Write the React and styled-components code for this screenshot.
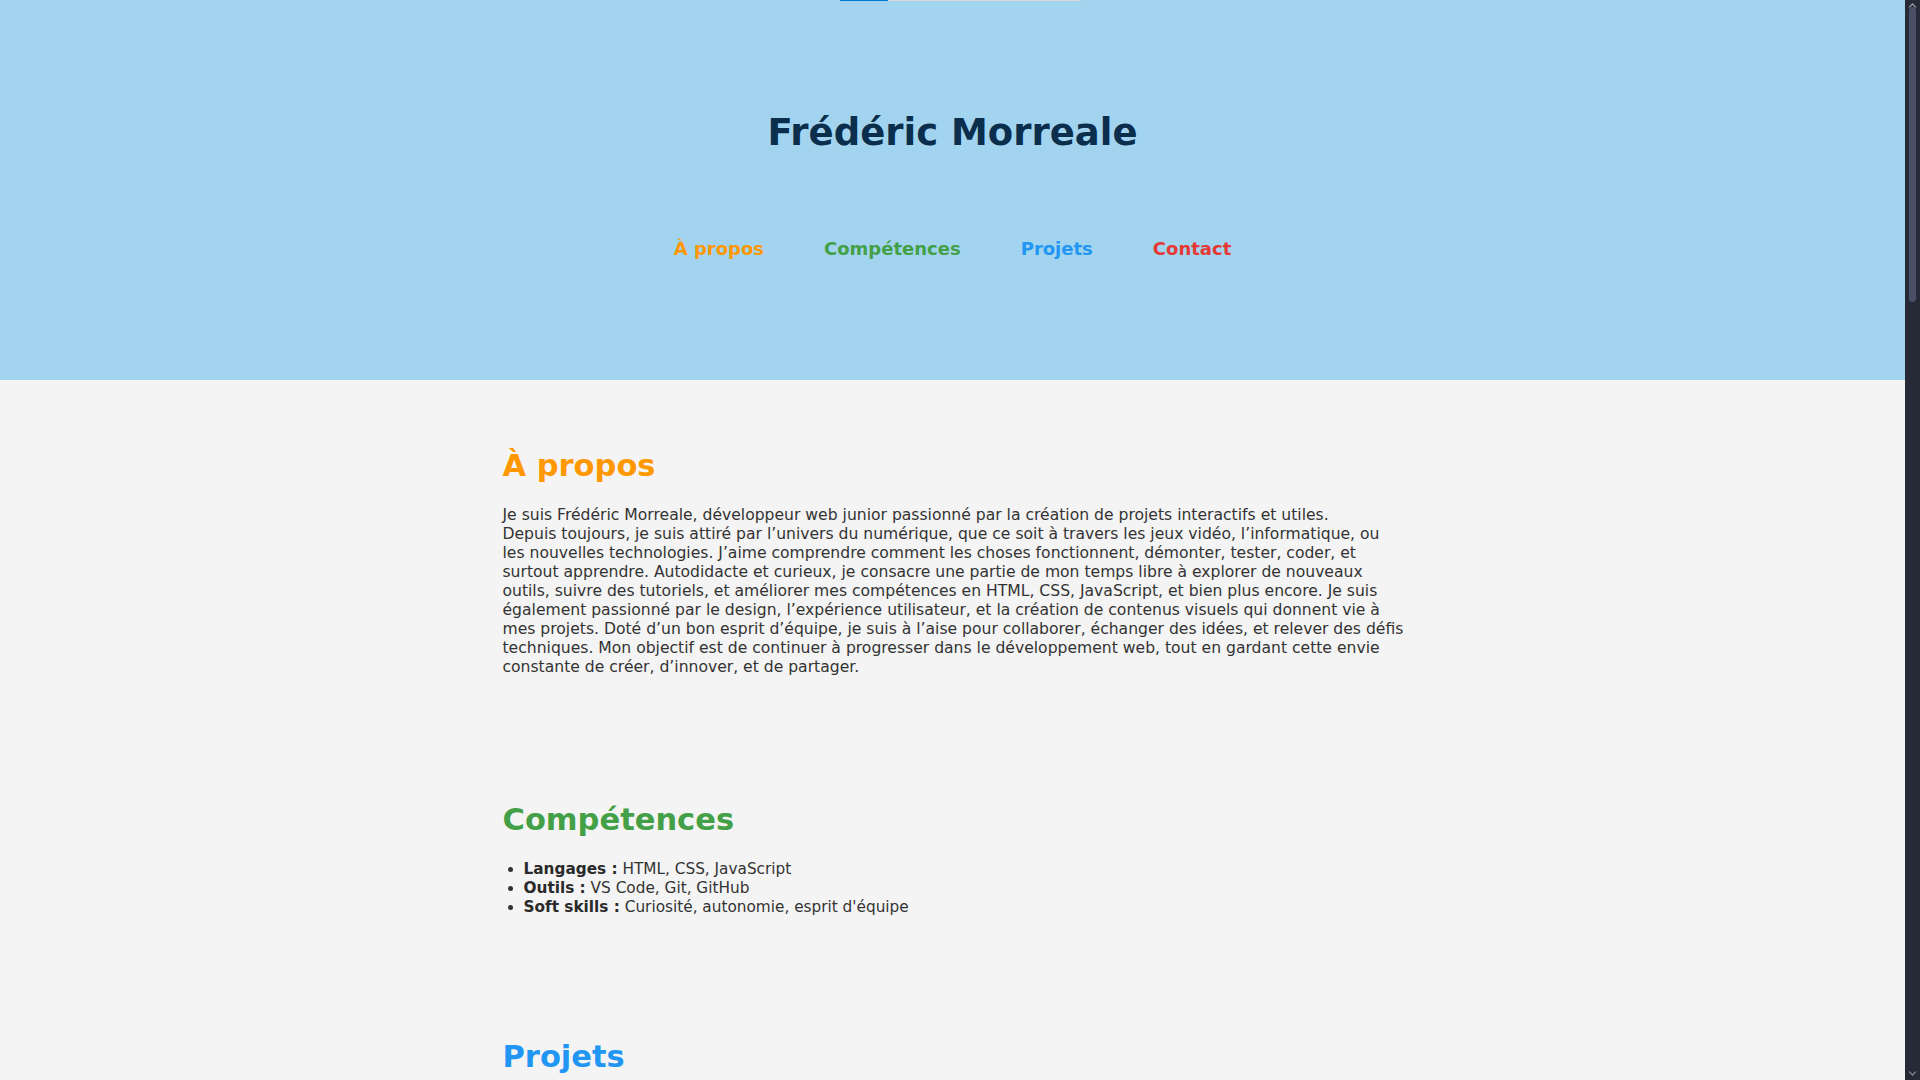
import React from "react";
import styled, { createGlobalStyle } from "styled-components";

const Global = createGlobalStyle`
  html {
    scrollbar-color: #4a4e67 #262a37;
  }
  body {
    margin: 0;
    background: #f4f4f4;
    color: #333333;
    font-family: "DejaVu Sans", "Noto Sans", sans-serif;
  }
`;

const Page = styled.div`
  margin-right: 15px;
`;

const ScrollTrack = styled.div`
  position: fixed;
  top: 0;
  right: 0;
  width: 15px;
  height: 100vh;
  background: #262a37;
  z-index: 20;
  display: flex;
  flex-direction: column;
  align-items: center;
`;

const ScrollArrow = styled.svg`
  display: block;
  width: 9px;
  height: 6px;
  margin: ${(p) => (p.$down ? "auto 0 3px" : "2px 0 0")};
`;

const ScrollThumb = styled.div`
  width: 7px;
  height: 295px;
  margin-top: -1px;
  border-radius: 4px;
  background: #4a4e67;
`;

const TopIndicator = styled.div`
  position: fixed;
  top: 0;
  left: 840px;
  width: 241px;
  height: 1px;
  background: #d9d9d9;
  display: flex;
  z-index: 10;
`;

const TopIndicatorFill = styled.div`
  width: 48px;
  height: 1px;
  background: #0078d4;
`;

const Header = styled.header`
  box-sizing: border-box;
  height: 380px;
  background: #a2d4f0;
  padding-top: 109px;
  display: flex;
  flex-direction: column;
  align-items: center;
`;

const Title = styled.h1`
  margin: 0;
  font-size: 37px;
  line-height: 48px;
  font-weight: 700;
  color: #0a2e4b;
`;

const Nav = styled.nav`
  margin-top: 80px;
  display: flex;
  gap: 60px;
`;

const NavLink = styled.a`
  font-size: 18px;
  line-height: 24px;
  font-weight: 700;
  text-decoration: none;
  color: ${(p) => p.$color};
`;

const Main = styled.main`
  max-width: 900px;
  margin: 0 auto;
  padding-top: 2px;
`;

const Section = styled.section`
  padding: 40px 0;
`;

const SectionTitle = styled.h2`
  margin: 24px 0 21px;
  font-size: 30.5px;
  line-height: 39px;
  font-weight: 700;
  color: ${(p) => p.$color};
`;

const Paragraph = styled.p`
  margin: 0 0 18.5px;
  font-size: 15.6px;
  line-height: 19px;
  white-space: nowrap;
`;

const SkillList = styled.ul`
  margin: 0 0 16px;
  padding-left: 21px;
  font-size: 15.3px;
  line-height: 19.2px;
`;

const Strong = styled.strong`
  font-weight: 700;
  color: #2a2a2a;
`;

const ProjectGrid = styled.div`
  display: flex;
  flex-direction: column;
  gap: 40px;
`;

const ProjectCard = styled.article`
  background: #ffffff;
  border-radius: 8px;
  padding: 24px;
  box-shadow: 0 2px 6px rgba(0, 0, 0, 0.08);
`;

const ProjectPreview = styled.div`
  height: 340px;
  border-radius: 6px;
  background: ${(p) => p.$bg};
  margin-bottom: 16px;
`;

const ProjectName = styled.h3`
  margin: 0 0 10px;
  font-size: 20px;
  color: #0a2e4b;
`;

const ProjectText = styled.p`
  margin: 0;
  font-size: 15px;
  line-height: 19.5px;
`;

const Form = styled.form`
  display: flex;
  flex-direction: column;
  gap: 16px;
`;

const Input = styled.input`
  padding: 12px;
  border: 1px solid #cccccc;
  border-radius: 6px;
  font: inherit;
  font-size: 15px;
`;

const TextArea = styled.textarea`
  padding: 12px;
  height: 200px;
  border: 1px solid #cccccc;
  border-radius: 6px;
  font: inherit;
  font-size: 15px;
`;

const Submit = styled.button`
  align-self: flex-start;
  padding: 12px 28px;
  border: none;
  border-radius: 6px;
  background: #e53935;
  color: #ffffff;
  font: inherit;
  font-weight: 700;
`;

const Footer = styled.footer`
  padding: 40px 0;
  text-align: center;
  background: #a2d4f0;
  color: #0a2e4b;
  font-size: 14px;
`;

const aboutLines = [
  "Je suis Frédéric Morreale, développeur web junior passionné par la création de projets interactifs et utiles.",
  "Depuis toujours, je suis attiré par l’univers du numérique, que ce soit à travers les jeux vidéo, l’informatique, ou",
  "les nouvelles technologies. J’aime comprendre comment les choses fonctionnent, démonter, tester, coder, et",
  "surtout apprendre. Autodidacte et curieux, je consacre une partie de mon temps libre à explorer de nouveaux",
  "outils, suivre des tutoriels, et améliorer mes compétences en HTML, CSS, JavaScript, et bien plus encore. Je suis",
  "également passionné par le design, l’expérience utilisateur, et la création de contenus visuels qui donnent vie à",
  "mes projets. Doté d’un bon esprit d’équipe, je suis à l’aise pour collaborer, échanger des idées, et relever des défis",
  "techniques. Mon objectif est de continuer à progresser dans le développement web, tout en gardant cette envie",
  "constante de créer, d’innover, et de partager.",
];

const projects = [
  { name: "Portfolio personnel", bg: "#d6ecf9", text: "Site vitrine réalisé en HTML, CSS et JavaScript." },
  { name: "Jeu du morpion", bg: "#e3f2e4", text: "Petit jeu interactif en JavaScript." },
  { name: "Application météo", bg: "#fdebd3", text: "Affichage de la météo à partir d’une API." },
];

export default function App() {
  return (
    <>
      <Global />
      <TopIndicator>
        <TopIndicatorFill />
      </TopIndicator>
      <ScrollTrack aria-hidden="true">
        <ScrollArrow viewBox="0 0 9 6">
          <path d="M0.5 5.5 L4.5 1 L8.5 5.5 L7 5.5 L4.5 2.8 L2 5.5 Z" fill="#a7a9b3" />
        </ScrollArrow>
        <ScrollThumb />
        <ScrollArrow $down viewBox="0 0 9 6">
          <path d="M0.5 0.5 L4.5 5 L8.5 0.5 L7 0.5 L4.5 3.2 L2 0.5 Z" fill="#8c8e99" />
        </ScrollArrow>
      </ScrollTrack>
      <Page>
        <Header>
          <Title>Frédéric Morreale</Title>
          <Nav>
            <NavLink href="#apropos" $color="#ff9800">À propos</NavLink>
            <NavLink href="#competences" $color="#43a047">Compétences</NavLink>
            <NavLink href="#projets" $color="#2196f3">Projets</NavLink>
            <NavLink href="#contact" $color="#e53935">Contact</NavLink>
          </Nav>
        </Header>
        <Main>
          <Section id="apropos">
            <SectionTitle $color="#ff9800">À propos</SectionTitle>
            <Paragraph>
              {aboutLines.map((l, i) => (
                <React.Fragment key={i}>
                  {l}
                  {i < aboutLines.length - 1 && <br />}
                </React.Fragment>
              ))}
            </Paragraph>
          </Section>
          <Section id="competences">
            <SectionTitle $color="#43a047">Compétences</SectionTitle>
            <SkillList>
              <li><Strong>Langages :</Strong> HTML, CSS, JavaScript</li>
              <li><Strong>Outils :</Strong> VS Code, Git, GitHub</li>
              <li><Strong>Soft skills :</Strong> Curiosité, autonomie, esprit d'équipe</li>
            </SkillList>
          </Section>
          <Section id="projets">
            <SectionTitle $color="#2196f3">Projets</SectionTitle>
            <ProjectGrid>
              {projects.map((p) => (
                <ProjectCard key={p.name}>
                  <ProjectPreview $bg={p.bg} />
                  <ProjectName>{p.name}</ProjectName>
                  <ProjectText>{p.text}</ProjectText>
                </ProjectCard>
              ))}
            </ProjectGrid>
          </Section>
          <Section id="contact">
            <SectionTitle $color="#e53935">Contact</SectionTitle>
            <Form onSubmit={(e) => e.preventDefault()}>
              <Input placeholder="Nom" />
              <Input placeholder="Email" />
              <TextArea placeholder="Message" />
              <Submit type="submit">Envoyer</Submit>
            </Form>
          </Section>
        </Main>
        <Footer>© 2025 Frédéric Morreale</Footer>
      </Page>
    </>
  );
}
